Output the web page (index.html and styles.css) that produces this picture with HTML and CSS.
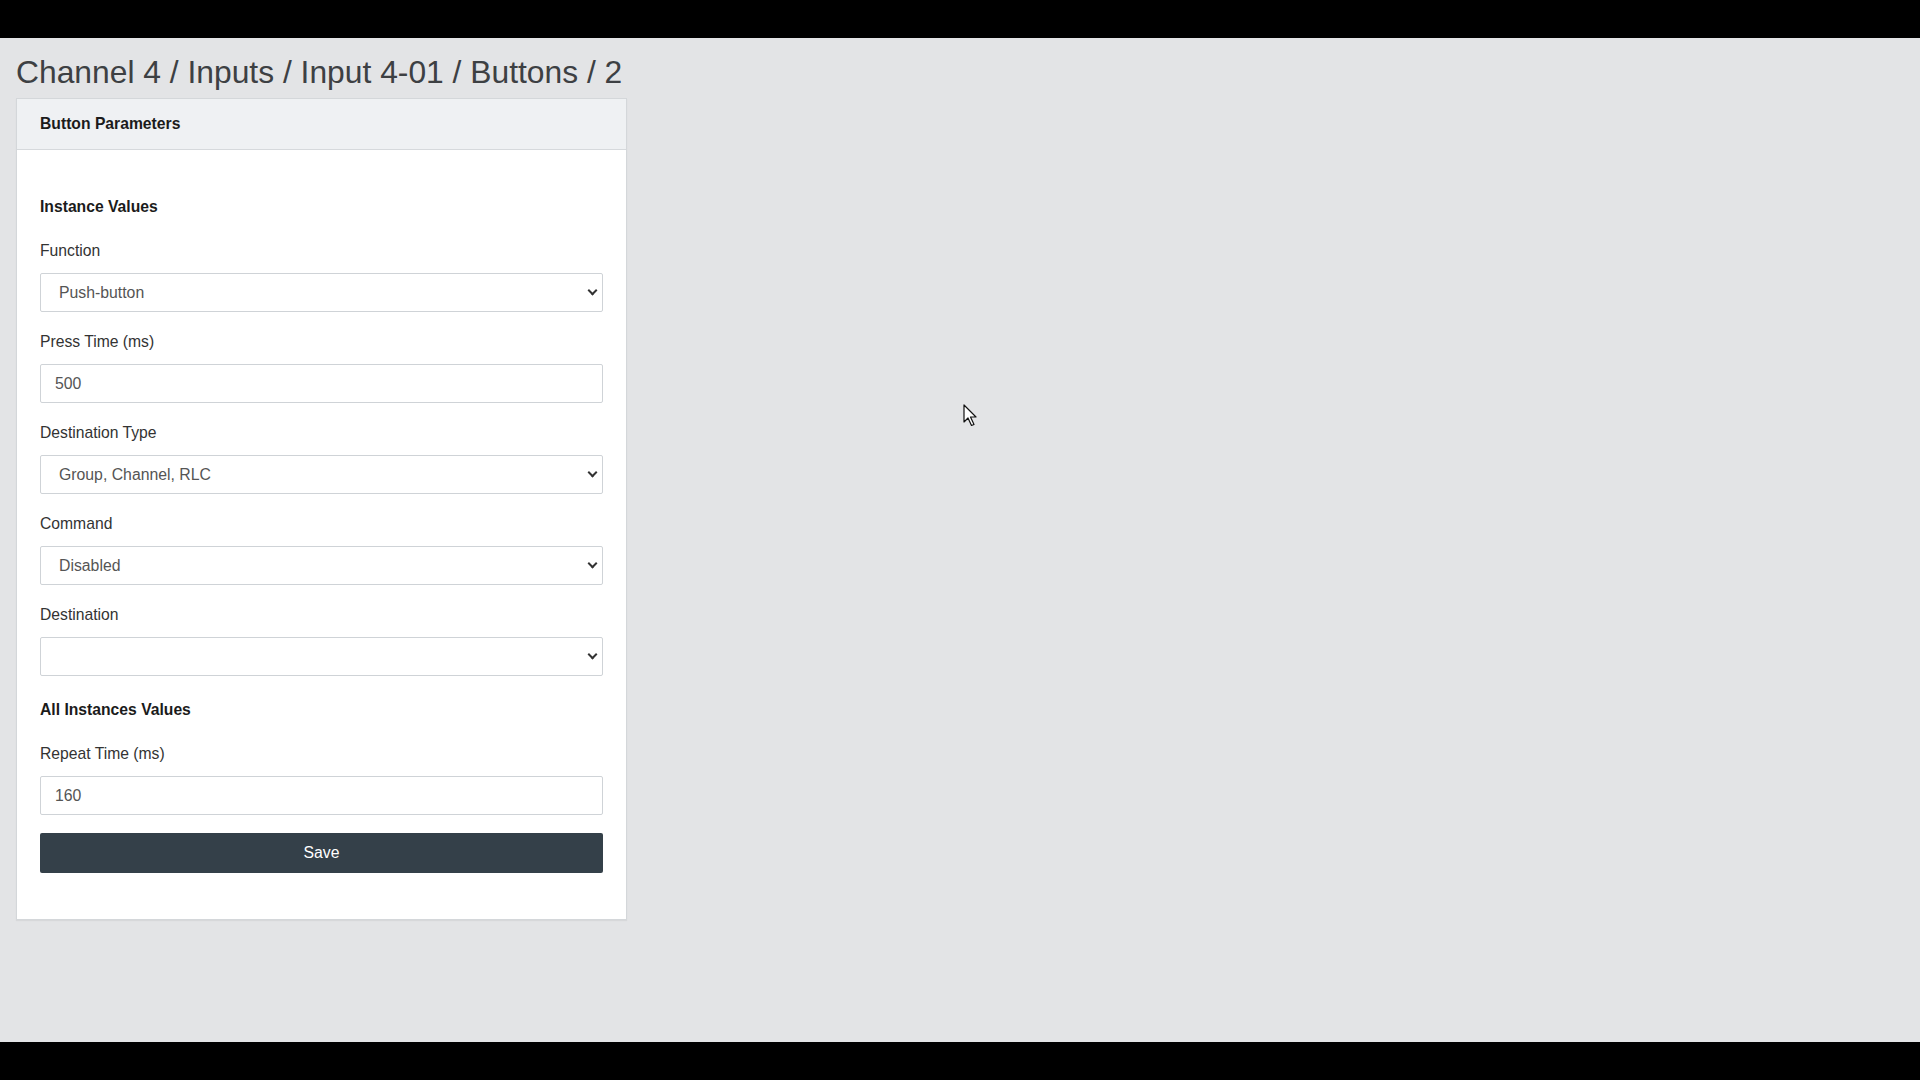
FILE: index.html
```html
<!DOCTYPE html>
<html lang="en">
<head>
  <meta charset="UTF-8" />
  <meta name="viewport" content="width=device-width, initial-scale=1.0"/>
  <title>Button Parameters - Channel 4</title>
  <link rel="stylesheet" href="styles.css">
</head>
<body>
  <div class="frame-bar"></div>

  <main class="page">
    <h1 class="crumbs">Channel 4 / Inputs / Input 4-01 / Buttons / 2</h1>

    <div class="card">
      <div class="card-header">Button Parameters</div>
      <form class="card-body">
        <div class="form-section">
          <h5 class="section-title">Instance Values</h5>

          <div class="form-group">
            <label for="function">Function</label>
            <div class="select-wrap">
              <select id="function" class="form-control">
                <option>Push-button</option>
                <option>Toggle</option>
              </select>
            </div>
          </div>

          <div class="form-group">
            <label for="pressTime">Press Time (ms)</label>
            <input id="pressTime" class="form-control" type="text" value="500">
          </div>

          <div class="form-group">
            <label for="destType">Destination Type</label>
            <div class="select-wrap">
              <select id="destType" class="form-control">
                <option>Group, Channel, RLC</option>
              </select>
            </div>
          </div>

          <div class="form-group">
            <label for="command">Command</label>
            <div class="select-wrap">
              <select id="command" class="form-control">
                <option>Disabled</option>
              </select>
            </div>
          </div>

          <div class="form-group">
            <label for="destination">Destination</label>
            <div class="select-wrap">
              <select id="destination" class="form-control">
                <option></option>
              </select>
            </div>
          </div>
        </div>

        <div class="form-section">
          <h5 class="section-title">All Instances Values</h5>

          <div class="form-group">
            <label for="repeatTime">Repeat Time (ms)</label>
            <input id="repeatTime" class="form-control" type="text" value="160">
          </div>
        </div>

        <button type="button" class="btn-save">Save</button>
      </form>
    </div>

    <!-- mouse pointer left over the page -->
    <svg class="pointer" width="16" height="23" viewBox="0 0 16 23">
      <path d="M1 1 L1 18 L5 14 L8.5 21.5 L11 20.5 L7.5 13 L13 13 Z" fill="#fff" stroke="#111" stroke-width="1.2" stroke-linejoin="round"/>
    </svg>
  </main>

  <div class="frame-bar"></div>
</body>
</html>
```

FILE: styles.css
```css
html, body {
  margin: 0;
  padding: 0;
  height: 100%;
}
body {
  display: flex;
  flex-direction: column;
  background: #000;
  font-family: 'Liberation Sans', Arial, sans-serif;
  color: #333;
}

.frame-bar {
  height: 38px;
  flex-shrink: 0;
  background: #000;
}

.page {
  flex: 1;
  position: relative;
  background: #e3e4e6;
  padding: 0 16px;
}

.crumbs {
  margin: 15px 0 7px;
  font-size: 31.8px;
  line-height: 38px;
  font-weight: normal;
  color: #3d4043;
}

.card {
  width: 611px;
  box-sizing: border-box;
  background: #fff;
  border: 1px solid #d4d7da;
  box-shadow: 0 1px 1px rgba(0, 0, 0, 0.05);
}
.card-header {
  padding: 15px 23px 16px;
  font-size: 15.7px;
  line-height: 19px;
  font-weight: bold;
  color: #1b1b1b;
  background: #eff1f3;
  border-bottom: 1px solid #d6d9dc;
}
.card-body {
  padding: 47px 23px 46px;
}

/* margins collapse with the last group's 20px */
.form-section + .form-section {
  margin-top: 24px;
}
.section-title {
  margin: 0 0 25px;
  font-size: 15.7px;
  line-height: 19px;
  font-weight: bold;
  color: #1b1b1b;
}

.form-group {
  margin-bottom: 20px;
}
.form-group label {
  display: block;
  margin-bottom: 13px;
  font-size: 15.7px;
  line-height: 19px;
  color: #333;
}

.form-control {
  display: block;
  width: 100%;
  height: 39px;
  box-sizing: border-box;
  margin: 0;
  padding: 0 14px;
  font-family: inherit;
  font-size: 15.8px;
  color: #555;
  background: #fff;
  border: 1px solid #cfd3d7;
  border-radius: 2px;
  outline: none;
}
select.form-control {
  appearance: none;
  -webkit-appearance: none;
  padding-left: 18px;
  padding-right: 30px;
}
.select-wrap {
  position: relative;
}
.select-wrap::after {
  content: '';
  position: absolute;
  right: 7px;
  top: 14px;
  width: 5px;
  height: 5px;
  border-right: 2px solid #333;
  border-bottom: 2px solid #333;
  transform: rotate(45deg);
  pointer-events: none;
}

.btn-save {
  display: block;
  width: 100%;
  height: 40px;
  margin-top: -2px;
  border: none;
  border-radius: 2px;
  background: #344049;
  color: #fff;
  font-family: inherit;
  font-size: 15.8px;
  cursor: pointer;
}
.btn-save:hover {
  background: #2a343c;
}

.pointer {
  position: absolute;
  left: 963px;
  top: 366px;
}
```
